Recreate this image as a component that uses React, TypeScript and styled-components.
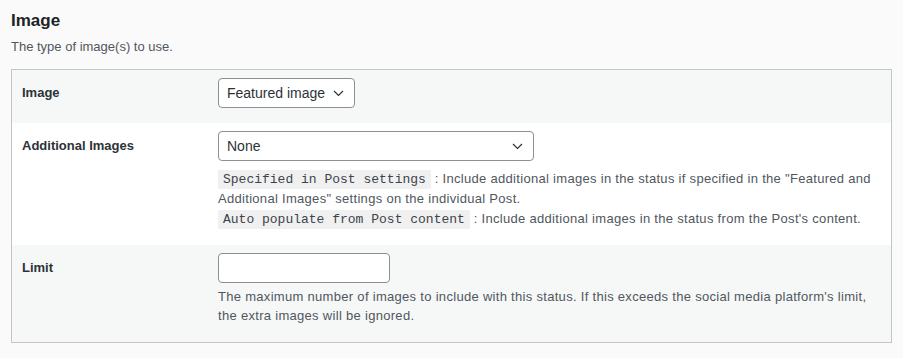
import styled, { createGlobalStyle } from "styled-components";

const GlobalStyle = createGlobalStyle`
  body {
    margin: 0;
    background: #fafafa;
    font-family: "Liberation Sans", Arial, sans-serif;
    color: #1d2327;
  }
`;

const Page = styled.div`
  padding: 9px 11px 14px;
`;

const Title = styled.h2`
  margin: 0;
  font-size: 17px;
  line-height: 23px;
  font-weight: 700;
  color: #1d2327;
`;

const Lead = styled.p`
  margin: 6px 0 13px;
  font-size: 13px;
  line-height: 18px;
  color: #50575e;
`;

const Table = styled.div`
  border: 1px solid #c3c4c7;
  background: #f6f7f7;
`;

const Row = styled.div<{ $alt?: boolean; $pb?: number }>`
  display: grid;
  grid-template-columns: 196px 1fr;
  background: ${(p) => (p.$alt ? "#ffffff" : "#f6f7f7")};
  padding: 8px 10px ${(p) => p.$pb ?? 15}px;
`;

const Label = styled.div`
  font-size: 13px;
  font-weight: 700;
  line-height: 30px;
  color: #2c3338;
`;

const Field = styled.div`
  display: flex;
  flex-direction: column;
  align-items: flex-start;
`;

const Select = styled.div<{ $width?: number }>`
  box-sizing: border-box;
  height: 30px;
  width: ${(p) => (p.$width ? `${p.$width}px` : "auto")};
  display: flex;
  align-items: center;
  justify-content: space-between;
  gap: 8px;
  padding: 0 10px 0 8px;
  background: #fff;
  border: 1px solid #8c8f94;
  border-radius: 4px;
  font-size: 14px;
  color: #2c3338;
`;

const Input = styled.input`
  box-sizing: border-box;
  width: 172px;
  height: 30px;
  background: #fff;
  border: 1px solid #8c8f94;
  border-radius: 4px;
  margin: 0;
`;

const Help = styled.p<{ $top?: number }>`
  margin: ${(p) => p.$top ?? 8}px 0 0;
  font-size: 13px;
  letter-spacing: 0.3px;
  line-height: 19.5px;
  color: #50575e;
  max-width: 658px;
`;

const Code = styled.code`
  display: inline-block;
  font-family: "Liberation Mono", "DejaVu Sans Mono", monospace;
  font-size: 13px;
  line-height: 19px;
  letter-spacing: 0;
  background: #f0f0f1;
  color: #3c434a;
  padding: 0 5px;
`;

const Chevron = () => (
  <svg width="11" height="7" viewBox="0 0 11 7" fill="none">
    <path d="M1 1l4.5 4.5L10 1" stroke="#2c3338" strokeWidth="1.2" />
  </svg>
);

export default function App() {
  return (
    <Page>
      <GlobalStyle />
      <Title>Image</Title>
      <Lead>The type of image(s) to use.</Lead>
      <Table>
        <Row>
          <Label>Image</Label>
          <Field>
            <Select>
              Featured image <Chevron />
            </Select>
          </Field>
        </Row>
        <Row $alt $pb={16}>
          <Label>Additional Images</Label>
          <Field>
            <Select $width={316}>
              None <Chevron />
            </Select>
            <Help $top={8}>
              <Code>Specified in Post settings</Code> : Include additional images in the status if specified in the "Featured and Additional Images" settings on the individual Post.
              <br />
              <Code>Auto populate from Post content</Code> : Include additional images in the status from the Post's content.
            </Help>
          </Field>
        </Row>
        <Row $pb={16}>
          <Label>Limit</Label>
          <Field>
            <Input type="text" />
            <Help $top={4}>
              The maximum number of images to include with this status. If this exceeds the social media platform's limit, the extra images will be ignored.
            </Help>
          </Field>
        </Row>
      </Table>
    </Page>
  );
}
